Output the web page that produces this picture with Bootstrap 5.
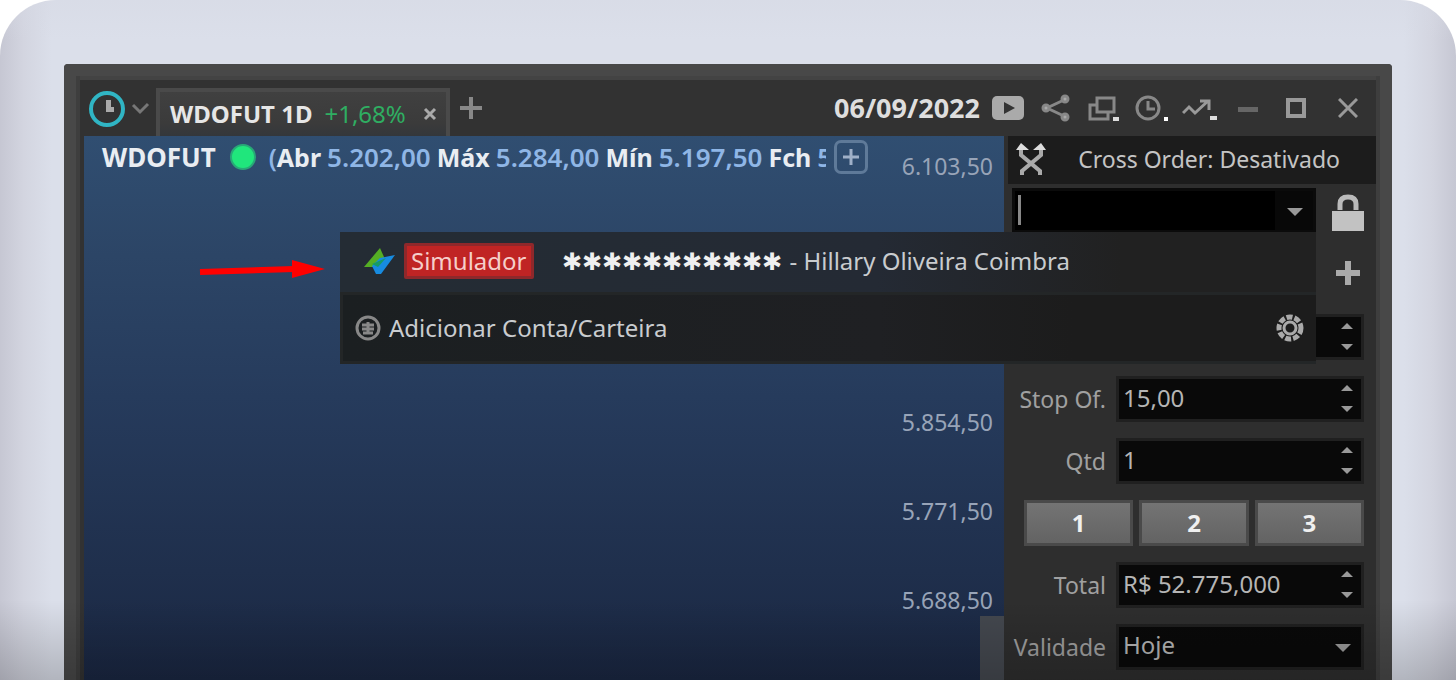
<!DOCTYPE html>
<html lang="pt-BR">
<head>
<meta charset="utf-8">
<meta name="viewport" content="width=device-width, initial-scale=1">
<title>WDOFUT 1D</title>
<link href="https://cdn.jsdelivr.net/npm/bootstrap@5.3.0/dist/css/bootstrap.min.css" rel="stylesheet">
<style>
body{background:#fff;font-family:"Noto Sans","Open Sans",sans-serif;font-size:24px;line-height:32px;color:#c4c4c4;overflow:hidden}
button{font:inherit;color:inherit;background:none;border:0;padding:0;line-height:0}
svg{display:block;flex:none}
.monitor{height:100vh;padding:64px 64px 0;border-radius:56px 56px 0 0;overflow:hidden;
 background:linear-gradient(#d6d9e480,#dbdfea00 40px),linear-gradient(90deg,#c6c7d3,#d3d5e0 24px,#dbdfea 52px,#dbdfea calc(100% - 52px),#d3d5e0 calc(100% - 24px),#c6c7d3)}
.monitor::after{content:"";position:absolute;inset:auto 0 0;height:80px;pointer-events:none;background:linear-gradient(#0000,#00000030)}
.window-frame{background:#323232;border:12px solid #484848;border-bottom:0;box-shadow:inset 4px 0 #3e3e3e,inset -4px 0 #3e3e3e,inset 0 4px #434343;border-radius:4px 4px 0 0;padding:4px 4px 0}
.title-bar{height:56px;padding:0 4px 0 8px}
.doc-tab{height:48px;padding:0 8px 0 10px;background:linear-gradient(#404040,#3b3b3b 70%,#34373b);border:4px solid #4a4a4a;border-bottom:0}
.tab-name{font-weight:700;color:#e6e6e6}
.up{color:#2fae62;margin-left:12px}
.tool{width:48px;height:36px;display:flex;align-items:center;justify-content:center;color:#aaa}
.date{font-weight:700;font-size:27px;color:#dedede}
.chart{margin-left:4px;background:linear-gradient(#304e71,#2c4566 22%,#263b5c 48%,#1f2f4c 80%,#1a2742)}
.quote{height:42px;padding:0 136px 0 18px;font-size:26px;line-height:40px;font-weight:700;color:#e9edf2;white-space:nowrap}
.ohlc{gap:6px}
.ohlc b{font-size:25px;font-weight:700}
.ohlc span{color:#8fb6e6;font-weight:600}
.dot{width:26px;height:26px;border-radius:50%;background:#20e67c;border:2px solid #28a877;margin:0 13px 0 14px;flex:none}
.add-box{width:34px;height:34px;border:3px solid #5f7a99;border-radius:7px;flex:none;margin-left:8px}
.price-axis{top:14px;right:11px;color:#98a4b8;text-align:right;font-size:23px}
.price-axis li{height:32px;margin-bottom:57px}
.price-axis li:first-child{margin-bottom:224px}
.thumb{right:0;bottom:0;width:24px;height:64px;background:#44484f}
.side{width:372px;padding-left:4px;background:#2e2e2e}
.cross{height:48px;background:#1c1c1c;padding:0 36px 2px 8px;font-size:23px}
.order-form{padding:4px 12px 0 4px;display:grid;grid-template-columns:100px 1fr;column-gap:4px;row-gap:16px;color:#a0a0a0}
.order-form>*{min-width:0}
.order-form label{align-self:center;display:flex;justify-content:flex-end;padding-right:6px;white-space:nowrap;font-size:23px}
.wide{grid-column:1/-1}
.dark-field{height:46px;background:#090909;border:3px solid #202020;border-radius:0;color:#b5b5b5;font-size:24px;line-height:32px;padding:0 44px 4px 4px;width:100%;outline:0}
.spin,.caret{right:9px;top:7px;width:16px;height:32px;position:absolute}
.spin{display:flex;flex-direction:column;justify-content:space-between;align-items:center;padding:2px 0 3px}
select.dark-field{appearance:none}
.caret{right:13px}
.account-row{height:48px}
.account{width:304px;height:44px}
.account input{height:44px;background:linear-gradient(90deg,#0000 3px,#888 3px 6px,#0000 6px) 0 4px/100% 30px no-repeat,linear-gradient(90deg,#000 260px,#080808 260px);border:3px solid #0b0b0b;border-bottom-width:2px;padding:0 44px 0 12px;width:100%;display:block;color:#ccc;outline:0}
.side-tool{width:32px;height:48px;display:flex;align-items:center;justify-content:center}
.plus-row{height:46px;padding-bottom:4px}
.qty{height:46px;line-height:38px;border:3px solid #4a4a4a;border-radius:0;background:linear-gradient(#747474,#636363);color:#f0f0f0;font-weight:700;font-size:24px;padding:0;flex:1}
.account-menu{right:0;top:100%;width:976px;z-index:5;color:#c9cccf;white-space:nowrap}
.account-menu .pick{height:60px;padding:0 20px 2px 22px;background:linear-gradient(90deg,#242c34,#242a34 55%,#212121 80%)}
.account-menu .more{height:72px;padding:0 12px 0 12px;border:solid #232627;border-width:3px 0 3px 3px;background:linear-gradient(90deg,#1b1f21,#1f2023 55%,#1c1c1c 75%)}
.sim{background:#c02424;border:3px solid #8f282b;border-radius:2px;color:#f5cfca;padding:0 4px;line-height:30px}
.stars{color:#f0f0f0;margin:0 8px 0 28px}
.pointer{right:calc(100% + 14px);top:26px}
</style>
</head>
<body>
<main class="monitor position-relative">
<div class="window-frame h-100 d-flex flex-column">
 <header class="title-bar d-flex align-items-center flex-shrink-0">
  <button aria-label="Menu" class="d-flex align-items-center"><svg width="64" height="40" fill="none"><circle cx="19" cy="21" r="16" stroke="#30b5c4" stroke-width="4"/><path d="M18 12v12h8v-5h-3v-7z" fill="#aaa"/><path d="m45 17 7 7 8-8" stroke="#777" stroke-width="3"/></svg></button>
  <div class="doc-tab d-flex align-items-center align-self-end ms-1"><span class="tab-name">WDOFUT 1D</span><span class="up">+1,68%</span><button aria-label="Fechar aba" class="ms-3"><svg width="16" height="16" stroke="#aaa" stroke-width="3"><path d="m3 3 10 10M13 3 3 13"/></svg></button></div>
  <button aria-label="Nova aba" class="ms-2"><svg width="26" height="26" stroke="#888" stroke-width="4"><path d="M13 2v22M2 13h22"/></svg></button>
  <span class="date ms-auto">06/09/2022</span>
  <nav class="d-flex ms-1" aria-label="Ferramentas">
   <button class="tool" aria-label="Vídeo"><svg width="32" height="26"><rect y="1" width="32" height="24" rx="5" fill="#aaa"/><path d="m12 7 11 6-11 6z" fill="#333"/></svg></button>
   <button class="tool" aria-label="Compartilhar"><svg width="30" height="28" fill="#aaa" stroke="#888" stroke-width="3"><path d="M25 5 6 14l19 9" fill="none"/><circle cx="24" cy="5" r="3"/><circle cx="5" cy="14" r="3"/><circle cx="24" cy="23" r="3"/></svg></button>
   <button class="tool" aria-label="Janelas"><svg width="32" height="26" fill="none" stroke="#888" stroke-width="3"><path d="M9 3h17v14H9zM8 10H2v14h18v-7"/><path d="M25 22h6v4h-6z" fill="#ddd" stroke="none"/></svg></button>
   <button class="tool" aria-label="Histórico"><svg width="34" height="26" fill="none" stroke="#888" stroke-width="3"><circle cx="13" cy="13" r="11"/><path d="M13 6v8h7"/><path d="M29 22h4v4h-4z" fill="#fff" stroke="none"/></svg></button>
   <button class="tool" aria-label="Indicadores"><svg width="36" height="24" fill="none" stroke="#999" stroke-width="3"><path d="m1 17 6-6 6 6L26 5M18 5h9v9"/><path d="M28 20h7v4h-7z" fill="#ddd" stroke="none"/></svg></button>
   <button class="tool" aria-label="Minimizar"><svg width="20" height="20"><path d="M0 9h20v5H0z" fill="#666"/></svg></button>
   <button class="tool" aria-label="Maximizar"><svg width="20" height="20" fill="none" stroke="#999" stroke-width="4"><path d="M2 2h16v16H2z"/></svg></button>
   <button class="tool ms-1" aria-label="Fechar"><svg width="20" height="20" stroke="#999" stroke-width="3"><path d="m1 1 18 18M19 1 1 19"/></svg></button>
  </nav>
 </header>
 <div class="d-flex flex-grow-1">
  <section class="chart position-relative flex-grow-1 overflow-hidden" aria-label="Gráfico">
   <div class="quote d-flex align-items-center">WDOFUT<i class="dot"></i><div class="ohlc d-flex flex-fill overflow-hidden"><b><span>(</span>Abr</b><span>5.202,00</span><b>Máx</b><span>5.284,00</span><b>Mín</b><span>5.197,50</span><b>Fch</b><span>5</span></div>
    <button class="add-box d-flex align-items-center justify-content-center" aria-label="Adicionar"><svg width="16" height="16" stroke="#9fb0c8" stroke-width="3"><path d="M8 0v16M0 8h16"/></svg></button></div>
   <ul class="price-axis list-unstyled position-absolute m-0"><li>6.103,50</li><li>5.854,50</li><li>5.771,50</li><li>5.688,50</li></ul>
   <div class="thumb position-absolute"></div>
  </section>
  <aside class="side flex-shrink-0">
   <div class="cross d-flex align-items-center justify-content-between"><svg width="30" height="32" fill="none" stroke="#aaa" stroke-width="4"><path d="M5 5v7l19 16v4M25 5v7L6 28v4"/><path d="M0 7 5 0l8 7zM17 7l8-7 5 7z" fill="#ddd" stroke="none"/></svg><span>Cross Order: Desativado</span></div>
   <form class="order-form">
    <div class="wide account-row d-flex justify-content-between">
     <div class="account position-relative"><input aria-label="Conta" type="text"><svg class="caret" viewBox="0 0 16 32"><path d="M0 13h16l-8 8z" fill="#999"/></svg>
      <div class="account-menu position-absolute">
       <svg class="pointer position-absolute" width="128" height="24"><path d="m2 14 94-3" stroke="red" stroke-width="6"/><path d="m94 2 33 9-33 9z" fill="red"/></svg>
       <div class="pick d-flex align-items-center"><svg width="34" height="28"><path d="M2 20 18 1l4 9v6l-9 4z" fill="#55ae24"/><path d="m33 8-15 3-8 8 4 8h5z" fill="#178be0"/><path d="m10 17 14-6-8 9z" fill="#159a69"/></svg><span class="sim ms-2">Simulador</span><span class="stars">✱✱✱✱✱✱✱✱✱✱✱</span><span>- Hillary Oliveira Coimbra</span></div>
       <div class="more d-flex align-items-center"><svg width="26" height="26" fill="none" stroke="#888" stroke-width="3"><circle cx="13" cy="13" r="11"/><path d="M7 10h12M7 14h12M8 18h10M13 7v12"/></svg><span class="ms-2">Adicionar Conta/Carteira</span><button type="button" class="ms-auto" aria-label="Configurar"><svg width="28" height="28" fill="none" stroke="#aaa"><circle cx="14" cy="14" r="11" stroke-width="5" stroke-dasharray="6 2"/><circle cx="14" cy="14" r="6" stroke-width="3"/></svg></button></div>
      </div></div>
     <button type="button" class="side-tool" aria-label="Bloquear"><svg width="32" height="38"><path d="M8 17v-6q0-7 8-7t8 7v6" fill="none" stroke="#bbb" stroke-width="5"/><path d="M0 18h32v20H0z" fill="#c2c2c2"/></svg></button>
    </div>
    <div class="wide plus-row d-flex justify-content-end align-items-center"><button type="button" class="side-tool" aria-label="Nova conta"><svg width="26" height="26" stroke="#aaa" stroke-width="6"><path d="M13 1v24M1 13h24"/></svg></button></div>
    <label for="p">Preço</label><div class="position-relative"><input id="p" class="dark-field"><span class="spin"><svg width="12" height="6" fill="#999"><path d="m6 0 6 6H0z"/></svg><svg width="12" height="6" fill="#999"><path d="m6 6 6-6H0z"/></svg></span></div>
    <label for="s">Stop Of.</label><div class="position-relative"><input id="s" class="dark-field" value="15,00"><span class="spin"><svg width="12" height="6" fill="#999"><path d="m6 0 6 6H0z"/></svg><svg width="12" height="6" fill="#999"><path d="m6 6 6-6H0z"/></svg></span></div>
    <label for="q">Qtd</label><div class="position-relative"><input id="q" class="dark-field" value="1"><span class="spin"><svg width="12" height="6" fill="#999"><path d="m6 0 6 6H0z"/></svg><svg width="12" height="6" fill="#999"><path d="m6 6 6-6H0z"/></svg></span></div>
    <div class="wide d-flex ps-2 ms-1" style="gap:6px"><button type="button" class="btn qty">1</button><button type="button" class="btn qty">2</button><button type="button" class="btn qty">3</button></div>
    <label for="t">Total</label><div class="position-relative"><input id="t" class="dark-field" value="R$ 52.775,000"><span class="spin"><svg width="12" height="6" fill="#999"><path d="m6 0 6 6H0z"/></svg><svg width="12" height="6" fill="#999"><path d="m6 6 6-6H0z"/></svg></span></div>
    <label for="v">Validade</label><div class="position-relative"><select id="v" class="dark-field"><option>Hoje</option></select><svg class="caret" viewBox="0 0 16 32"><path d="M0 13h16l-8 8z" fill="#999"/></svg></div>
   </form>
  </aside>
 </div>
</div>
</main>
<script src="https://cdn.jsdelivr.net/npm/bootstrap@5.3.0/dist/js/bootstrap.bundle.min.js"></script>
</body>
</html>
